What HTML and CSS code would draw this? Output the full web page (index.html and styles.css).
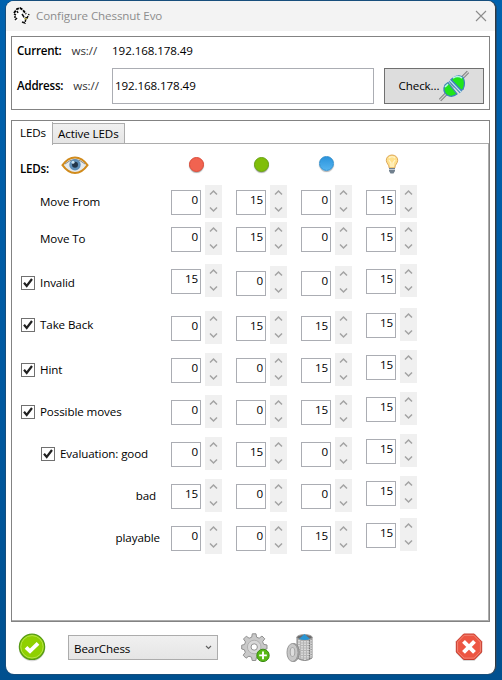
FILE: index.html
```
<!DOCTYPE html>
<html lang="en">
<head>
<meta charset="utf-8">
<title>Configure Chessnut Evo</title>
<link rel="stylesheet" href="styles.css">
</head>
<body>
<div class="window">
  <header class="titlebar">
    <svg class="app-icon" width="18" height="18" viewBox="0 0 18 18"><path d="M1 6L4 2L7 1L10 3L13 7" fill="none" stroke="#000" stroke-width="1.8" stroke-dasharray="3 1"/><path d="M3 6L8 4L12 9L15 7L13 16L7 12L2 15Z" fill="#fff"/><path d="M1 7L3 8M4 4L5 6M1 10H3M2 13L4 11" stroke="#111" stroke-width="1.5"/><path d="M9 7L11 10L14 11L16 7M13 11L12 16L9 15" fill="none" stroke="#111" stroke-width="1.5" stroke-dasharray="4 1"/><path d="M11 11H15L12 13Z" fill="#b8ad50"/></svg>
    <span class="title">Configure Chessnut Evo</span>
    <svg class="close" width="12" height="12" viewBox="0 0 12 12"><path d="M1 1L11 11M11 1L1 11" stroke="#8c8c8c" stroke-width="1.1"/></svg>
  </header>

  <section class="connection">
    <div class="line current"><b>Current:</b><span class="scheme">ws://</span><span class="address">192.168.178.49</span></div>
    <div class="line edit">
      <b>Address:</b><span class="scheme">ws://</span>
      <div class="input">192.168.178.49</div>
      <div class="check-button"><span>Check...</span>
        <svg width="30" height="32" viewBox="0 0 30 32"><path d="M1 30L8 23M22 9L29 2" stroke="#858585" stroke-width="3.2"/><path d="M1 30L8 23M22 9L29 2" stroke="#d0d0d0" stroke-width="1.2"/><path d="M12 13L16 17M16 9L20 13" stroke="#999" stroke-width="2.6"/><path d="M6 15L9 12.5L18 24Q13 28 8 25Q3 21 6 15Z" fill="#20e51b" stroke="#3f80bd" stroke-width="1.2"/><path d="M11 10.5L22 22" stroke="#4a87bd" stroke-width="3.4"/><path d="M11 10.5L22 22" stroke="#c2e9ef" stroke-width="1.2"/><path d="M14 8Q20 4 24 7.5Q27 13 24 19.5L22 20L12 9.5Z" fill="#20e51b" stroke="#3f80bd" stroke-width="1.2"/><path d="M14 8Q19 5 23 8M6 17L9 14" stroke="#b9f4e9" stroke-width="1.6" fill="none"/></svg>
      </div>
    </div>
  </section>

  <section class="tabs">
    <nav class="tab-strip"><span class="tab selected">LEDs</span><span class="tab">Active LEDs</span></nav>
    <div class="page">
      <div class="heading">
        <div class="heading-label"><b>LEDs:</b>
          <svg width="28" height="19" viewBox="0 0 28 19"><path d="M1.5 9.2Q7 1.5 14 1.5Q21 1.5 26.5 9.2Q21 17 14 17Q7 17 1.5 9.2Z" fill="#e6eaec" stroke="#d18b1c" stroke-width="2"/><path d="M4 8Q14-1 24 8" fill="none" stroke="#8d8b81" stroke-width="1"/><circle cx="14" cy="8.7" r="5.7" fill="#5f8fb8"/><circle cx="14" cy="8.7" r="3" fill="#23364a"/><circle cx="12" cy="6.2" r="1.5" fill="#c9e4f3"/></svg>
        </div>
        <span class="lamp red"></span><span class="lamp green"></span><span class="lamp blue"></span>
        <svg class="bulb" width="14" height="21" viewBox="0 0 14 21"><path d="M7 1C3.5 1 1.3 3.4 1.3 6.3C1.3 9.5 4.2 10.5 4.2 14H9.8C9.8 10.5 12.7 9.5 12.7 6.3C12.7 3.4 10.5 1 7 1Z" fill="#ffe18d" stroke="#dda85a"/><path d="M4 6L6 9V13M10 6L8 9V13M4 4Q7 1.5 10 4" fill="none" stroke="#fff5ce" stroke-width="1.2"/><path d="M4 14H10V17L8.5 19.5H5.5L4 17Z" fill="#71808e"/><path d="M4 15.5H10" stroke="#c4ccd4"/></svg>
      </div>
      <div class="rows" id="rows"></div>
    </div>
  </section>

  <footer class="footer">
    <svg class="ok" width="28" height="29" viewBox="0 0 28 29"><circle cx="14" cy="15" r="13.2" fill="#bbb" opacity=".6"/><circle cx="14" cy="13.8" r="12.6" fill="#8fd000" stroke="#569b15" stroke-width="1.3"/><circle cx="14" cy="13.8" r="11.2" fill="none" stroke="#b5e34a" stroke-width="1"/><path d="M8 14.4L12 18.2L20 10.3" fill="none" stroke="#fff" stroke-width="3.8"/></svg>
    <div class="select"><span>BearChess</span><svg width="7" height="5" viewBox="0 0 7 5"><path d="M1 1L3.5 3.5L6 1" fill="none" stroke="#606060" stroke-width="1.1"/></svg></div>
    <svg class="gear" width="29" height="30" viewBox="0 0 29 30"><g fill="#c9c9c9" stroke="#919191" stroke-width="1"><path d="M11.3 0.8H15L15.6 4.2L18.2 5.2L21 3L23.8 5.8L21.6 8.7L22.7 11.3L26 12V15.9L22.7 16.6L21.6 19.3L23.8 22L20.5 25.2L17.8 23.2L15.5 24.2L14.8 27.5H11.2L10.5 24.2L7.9 23.2L5 25.2L2.2 22.2L4.3 19.3L3.3 16.7L.7 16V12.2L3.5 11.5L4.5 8.9L2.5 6L5.3 3.2L8.1 5.2L10.7 4.2Z"/><circle cx="13.2" cy="14" r="6.8" fill="#d8d8d8" stroke="#b0b0b0"/><circle cx="13.2" cy="14" r="3.2" fill="#fff"/></g><circle cx="22" cy="22.4" r="6.2" fill="#58b814" stroke="#3a8b12"/><path d="M22 18.6V26.2M18.2 22.4H25.8" stroke="#fff" stroke-width="1.9"/></svg>
    <svg class="trash" width="28" height="30" viewBox="0 0 28 30"><path d="M11 4V25Q19 30 26 25V4Z" fill="#b5b5b5" stroke="#858585"/><path d="M13 7V25M16 8V26M19 8V27M22 8V26M25 7V25" stroke="#f0f0f0" stroke-width="1.2" stroke-dasharray="1.5 1"/><path d="M23.5 7V26" stroke="#777" stroke-width="1.3" stroke-dasharray="1.5 1"/><ellipse cx="18.5" cy="4.3" rx="7.7" ry="2.7" fill="#686868" stroke="#a2a2a2"/><path d="M13 6L18.5 1L24 6Q19 8 13 6Z" fill="#2995d3"/><ellipse cx="7.8" cy="19.5" rx="5.5" ry="9" fill="#aaa" stroke="#888"/><ellipse cx="6.5" cy="19.5" rx="5.5" ry="9" fill="#c8c8c8" stroke="#999"/><ellipse cx="6.5" cy="19" rx="2.3" ry="4.5" fill="#dedede" stroke="#a5a5a5"/></svg>
    <svg class="cancel" width="28" height="29" viewBox="0 0 28 29"><path d="M8.5 2H19.5L27 9.5V20L19.5 27.8H8.5L1 20V9.5Z" fill="#aaa" opacity=".6"/><path d="M8.7 1H19.3L26.7 8.5V19L19.3 26.5H8.7L1.3 19V8.5Z" fill="#ed5643" stroke="#c63d30"/><path d="M9.2 2.3H18.8L25.4 9V18.5L18.8 25.1H9.2L2.6 18.5V9Z" fill="none" stroke="#f18472"/><path d="M8.5 8.3L19.5 19.3M19.5 8.3L8.5 19.3" stroke="#fff" stroke-width="4"/></svg>
  </footer>
</div>
<script src="rows.js"></script>
</body>
</html>
```
FILE: styles.css
```
* { box-sizing: border-box; }
body { margin: 0; width: 502px; height: 680px; overflow: hidden; padding: 1px 6px 6px; background: linear-gradient(#0062ae, #00589f 60%, #00508f); font: 11.6px/16px "Open Sans", "Noto Sans", sans-serif; color: #000; letter-spacing: -.1px; }
svg { display: block; flex: none; }
b { font-weight: 600; letter-spacing: -.25px; }
.window { width: 490px; height: 673px; background: #fff; border-radius: 8px; overflow: hidden; box-shadow: 0 0 0 1px #174e7c; border-right: 1px solid #32383e; display: flex; flex-direction: column; }
.titlebar { height: 30px; flex: none; background: #f3f3f3; display: flex; align-items: center; padding: 0 9px 0 7px; margin-right: -1px; }
.title { margin-left: 5px; color: #8d8d8d; letter-spacing: -.1px; }
.close { margin-left: auto; margin-top: -1px; }
.connection { width: 479px; height: 74px; flex: none; margin: 5px 0 0 5px; border: 1px solid #838383; padding: 0 5px; }
.line { display: flex; align-items: center; }
.current { height: 16px; margin-top: 6px; }
.scheme { margin-left: 10px; color: #333; }
.current .address { margin-left: 15px; }
.address, .input { letter-spacing: -.1px; }
.edit { height: 36px; margin-top: 9px; }
.input { width: 262px; height: 36px; margin-left: auto; border: 1px solid #abadb3; padding: 9px 2px; }
.check-button { width: 100px; height: 36px; margin-left: 10px; background: #ddd; border: 1px solid #707070; display: flex; align-items: center; justify-content: center; }
.tabs { width: 479px; height: 502px; flex: none; margin: 10px 0 0 5px; border: 1px solid #838383; }
.tab-strip { height: 23px; display: flex; align-items: flex-end; }
.tab { position: relative; height: 21px; width: 73px; border: 1px solid #acacac; background: linear-gradient(#f0f0f0, #e5e5e5); padding: 2px 0 0 5px; white-space: nowrap; margin-left: -1px; }
.tab.selected { width: 41px; height: 23px; margin: 0 0 -1px; padding: 3px 0 0 8px; background: #fff; border-width: 0 1px 0 0; z-index: 1; }
.page { height: 478px; margin-top: -1px; border: 1px solid #acacac; border-left: 0; }
.heading { height: 41px; display: grid; grid-template-columns: 154px 65px 65px 65px 65px; }
.heading-label { display: flex; align-items: center; height: 19px; margin-top: 13px; padding-left: 8px; }
.heading-label svg { margin: -2px 0 0 12px; }
.heading-label b { margin-top: 5px; }
.lamp { width: 15px; height: 15px; margin: 13px 0 0 23px; border-radius: 50%; box-shadow: 0 1px 1px #aaa; }
.red { background: #f16350; border: 1px solid #df4c39; }
.green { background: #80be08; border: 1px solid #68a413; }
.blue { background: linear-gradient(#2b94dd, #54b3ee); border: 1px solid #2e8dcc; margin-top: 12px; }
.bulb { margin: 10px 0 0 24px; }
.row { height: 42px; display: grid; grid-template-columns: 159px repeat(4, 65px); align-items: start; }
.row.from { height: 37px; }
.row.invalid { height: 44px; }
.label { display: flex; align-items: center; height: 16px; padding-left: 28px; white-space: nowrap; }
.label.checked { padding-left: 9px; }
.label.indent { padding-left: 29px; }
.label.end { justify-content: flex-end; padding-right: 15px; }
.label.end.playable { padding-right: 11px; }
.drop9 { margin-top: 9px; }
.drop11 { margin-top: 11px; }
.drop12 { margin-top: 12px; }
.drop2 { margin-top: 2px; }
.drop3 { margin-top: 3px; }
.box { width: 14px; height: 14px; border: 1px solid #707070; margin-right: 5px; flex: none; }
.spin { display: flex; gap: 4px; height: 33px; }
.value { width: 30px; height: 25px; margin-top: 5px; border: 1px solid #abadb3; text-align: right; padding: 1px 2px; }
.arrows { width: 17px; height: 33px; background: #f0f0f0; }
.footer { display: flex; padding: 11px 12px 0 12px; }
.select { width: 150px; height: 25px; margin: 2px 0 0 22px; border: 1px solid #acacac; background: linear-gradient(#f0f0f0, #e5e5e5); display: flex; align-items: center; justify-content: space-between; padding: 2px 5px 0 5px; }
.select svg { margin-top: -2px; }
.gear { margin-left: 23px; }
.trash { margin-left: 16px; }
.cancel { margin-left: auto; }
```
FILE: rows.js
```
const rows = [
  { text: "Move From", cls: "", drop: "drop9", row: "from", v: [0, 15, 0, 15], d: ["", "", "", ""] },
  { text: "Move To", cls: "", drop: "drop9", row: "", v: [0, 15, 0, 15], d: ["", "", "", ""] },
  { text: "Invalid", cls: "checked", drop: "drop11", row: "invalid", v: [15, 0, 0, 15], d: ["", "drop2", "drop2", ""] },
  { text: "Take Back", cls: "checked", drop: "drop9", row: "", v: [0, 15, 15, 15] },
  { text: "Hint", cls: "checked", drop: "drop12", row: "", v: [0, 0, 15, 15] },
  { text: "Possible moves", cls: "checked", drop: "drop12", row: "", v: [0, 0, 15, 15] },
  { text: "Evaluation: good", cls: "checked indent", drop: "drop12", row: "", v: [0, 15, 0, 15] },
  { text: "bad", cls: "end", drop: "drop12", row: "", v: [15, 0, 0, 15] },
  { text: "playable", cls: "end playable", drop: "drop12", row: "", v: [0, 0, 15, 15] }
];
const tick = '<svg width="12" height="12" viewBox="0 0 12 12"><path d="M2 5.8L4.7 9L10 2" fill="none" stroke="#212121" stroke-width="2.2"/></svg>';
const arrows = '<svg class="arrows" viewBox="0 0 17 33"><path d="M5 9.5L8.5 6L12 9.5M5 22.5L8.5 26L12 22.5" fill="none" stroke="#a3a3a3" stroke-width="1.5"/></svg>';
document.getElementById("rows").innerHTML = rows.map(r => {
  const drops = r.d || ["drop3", "drop3", "drop3", ""];
  const box = r.cls.includes("checked") ? `<span class="box">${tick}</span>` : "";
  const spins = r.v.map((v, i) => `<div class="spin ${drops[i]}"><div class="value">${v}</div>${arrows}</div>`).join("");
  return `<div class="row ${r.row}"><div class="label ${r.cls} ${r.drop}">${box}<span>${r.text}</span></div>${spins}</div>`;
}).join("");
```
